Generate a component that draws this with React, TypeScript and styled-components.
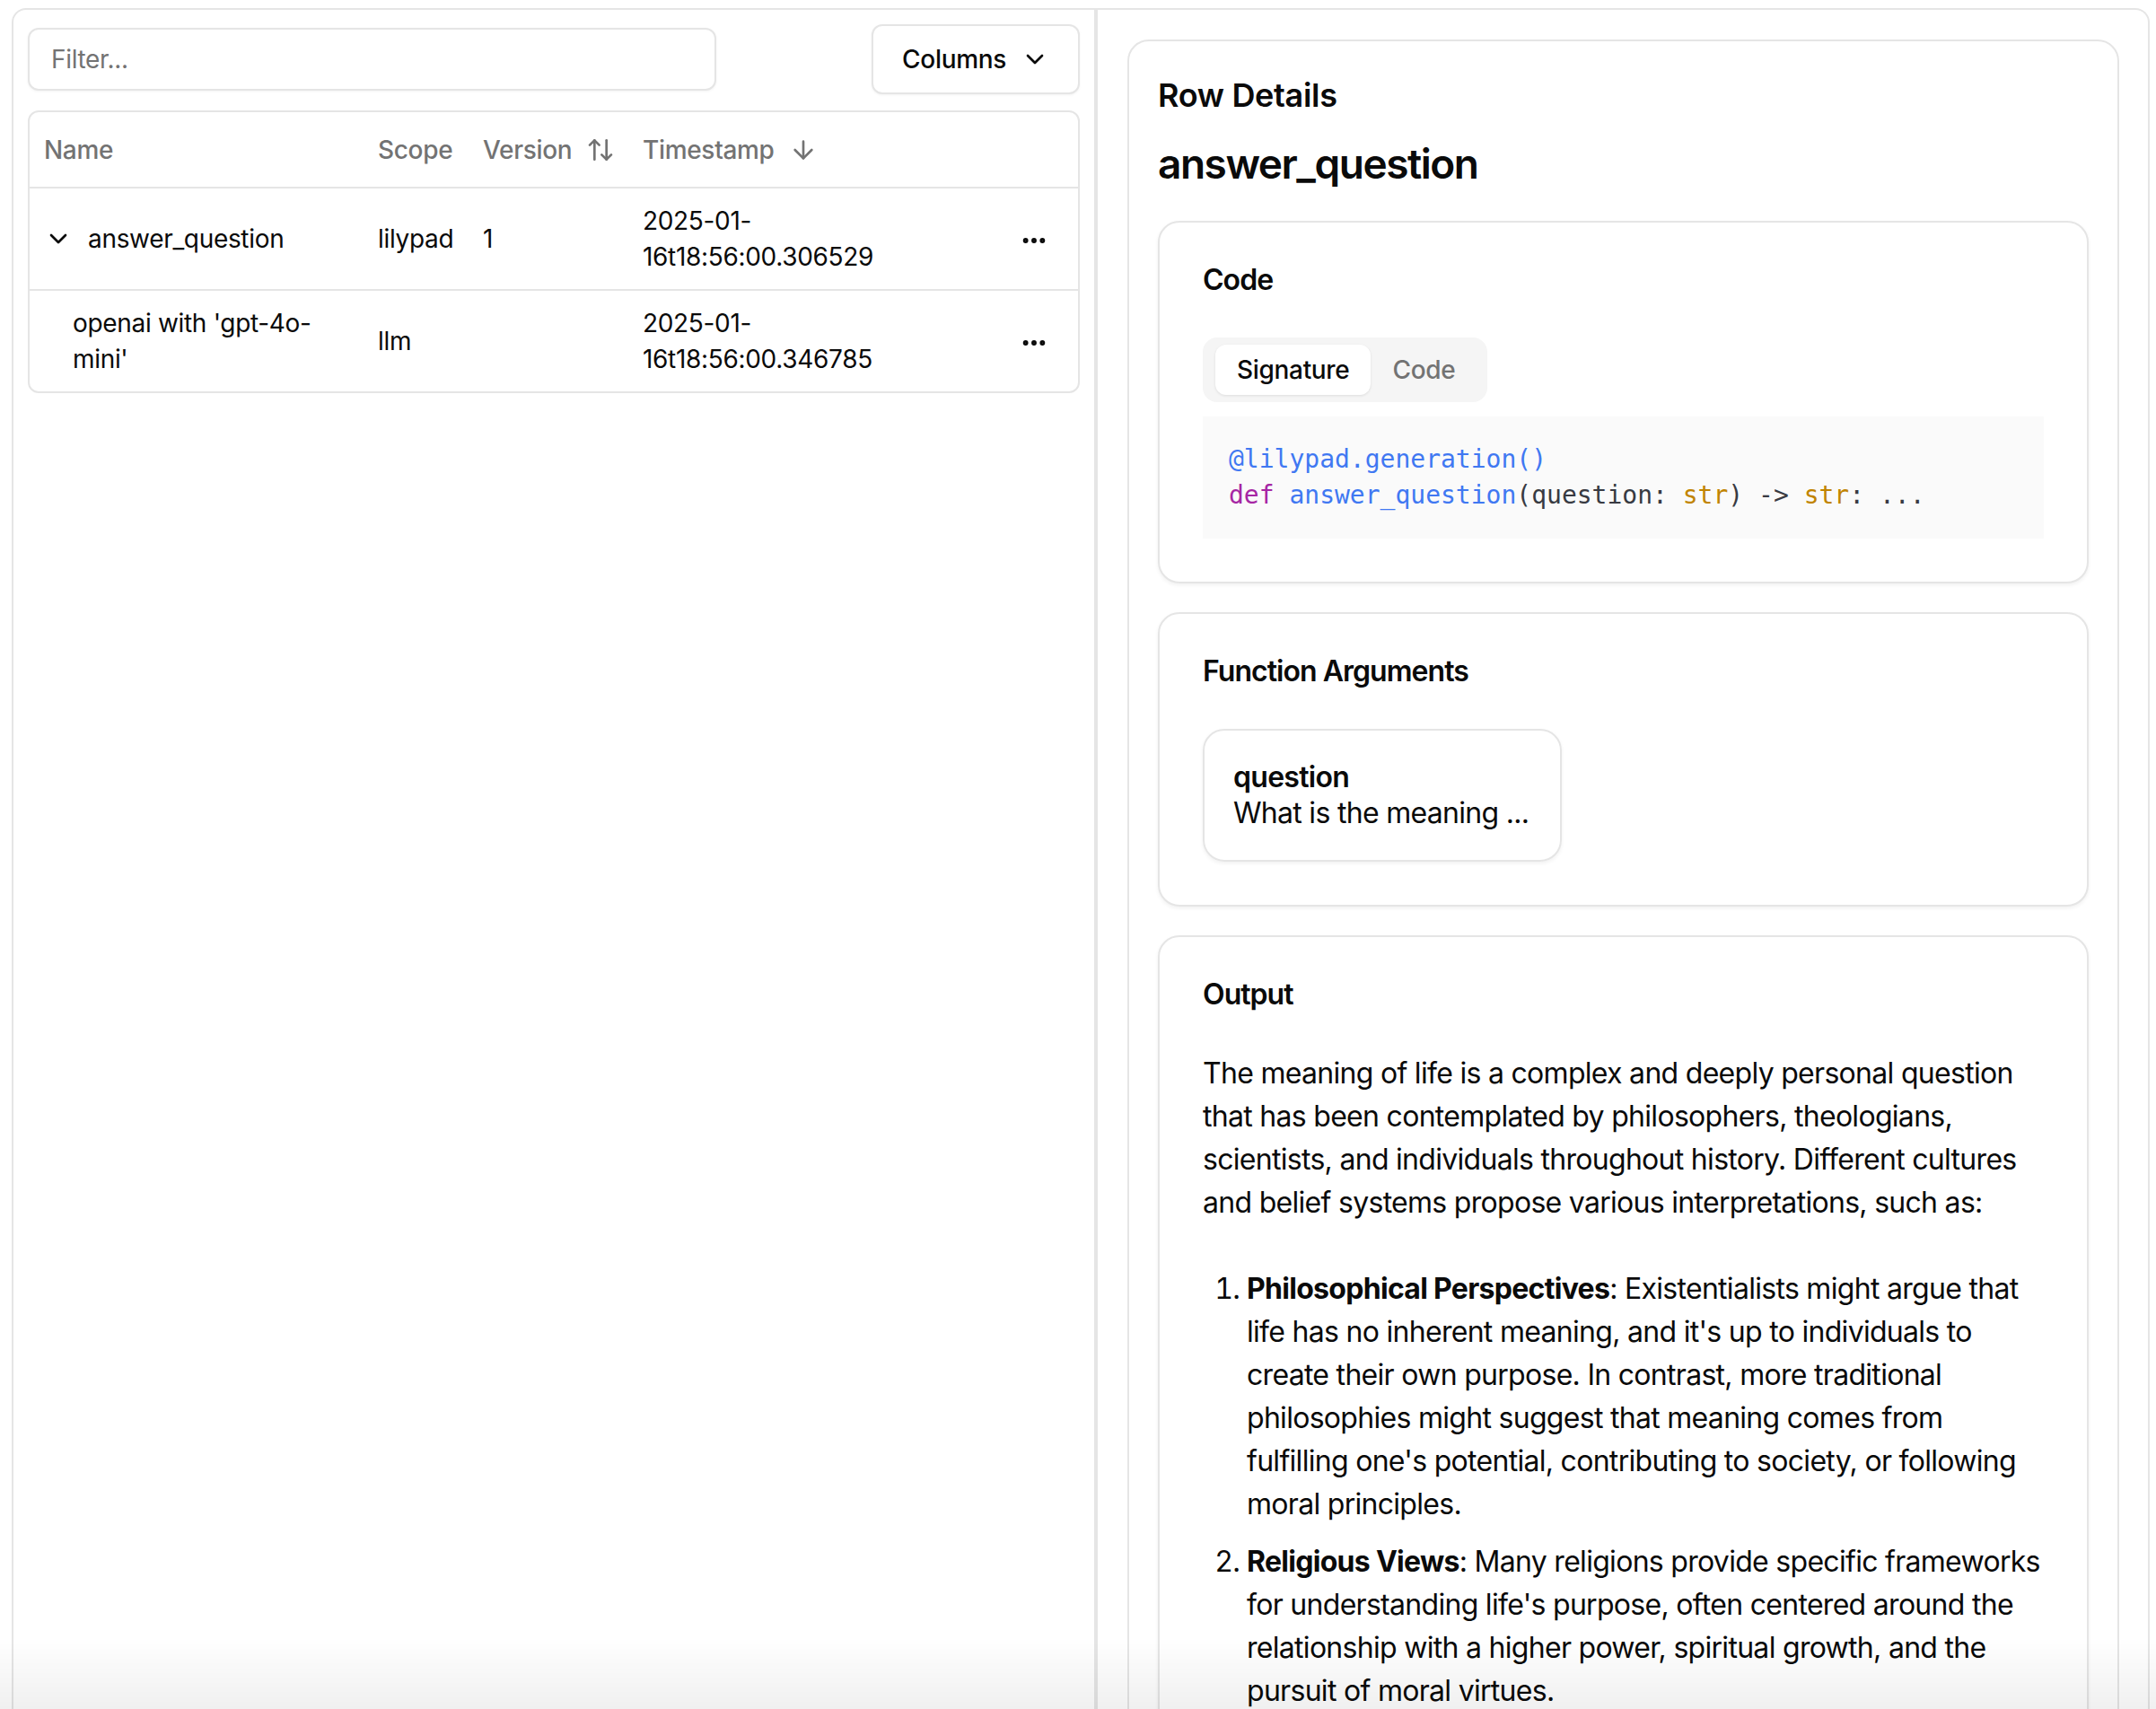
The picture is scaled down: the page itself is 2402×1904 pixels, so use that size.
import React from "react";
import styled, { createGlobalStyle } from "styled-components";
import { ChevronDown, ArrowUpDown, ArrowDown, Ellipsis } from "lucide-react";

const GlobalStyle = createGlobalStyle`
  * { box-sizing: border-box; }
  html, body {
    margin: 0;
    padding: 0;
    background: #ffffff;
  }
  body {
    font-family: Inter, "Noto Sans", sans-serif;
    color: #0a0a0a;
    letter-spacing: -0.02em;
    overflow: hidden;
    -webkit-font-smoothing: antialiased;
  }
  body::after {
    content: "";
    position: fixed;
    left: 0;
    right: 0;
    bottom: 0;
    height: 80px;
    pointer-events: none;
    background: linear-gradient(to bottom, rgba(0, 0, 0, 0), rgba(0, 0, 0, 0.06));
  }
`;

const border = "#e5e5e5";
const muted = "#737373";

const Page = styled.div`
  height: 100vh;
  padding: 9px 7px 0 13px;
`;

const Frame = styled.div`
  height: 100%;
  display: flex;
  border: 2px solid ${border};
  border-bottom: none;
  border-radius: 16px 16px 0 0;
  overflow: hidden;
`;

const LeftPanel = styled.section`
  width: 1204px;
  flex-shrink: 0;
  padding: 16px;
  display: flex;
  flex-direction: column;
`;

const Divider = styled.div`
  width: 4px;
  flex-shrink: 0;
  background: ${border};
`;

const RightPanel = styled.section`
  flex: 1;
  padding: 33px 32px 0 33px;
  overflow: hidden;
`;

const Toolbar = styled.div`
  display: flex;
  align-items: center;
  justify-content: space-between;
  margin-bottom: 18px;
`;

const FilterInput = styled.input`
  width: 767px;
  height: 70px;
  border: 2px solid ${border};
  border-radius: 12px;
  padding: 0 24px;
  font-family: inherit;
  font-size: 28px;
  letter-spacing: inherit;
  color: #0a0a0a;
  box-shadow: 0 1px 3px rgba(0, 0, 0, 0.05);
  outline: none;
  &::placeholder {
    color: ${muted};
  }
`;

const OutlineButton = styled.button`
  height: 78px;
  display: inline-flex;
  align-items: center;
  gap: 16px;
  padding: 0 32px;
  border: 2px solid ${border};
  border-radius: 12px;
  background: #ffffff;
  font-family: inherit;
  font-size: 28px;
  font-weight: 500;
  letter-spacing: inherit;
  color: #0a0a0a;
  box-shadow: 0 1px 3px rgba(0, 0, 0, 0.05);
`;

const TableBox = styled.div`
  border: 2px solid ${border};
  border-radius: 12px;
  overflow: hidden;
`;

const Table = styled.table`
  width: 100%;
  border-collapse: collapse;
  table-layout: fixed;
  font-size: 28px;
`;

const HeadCell = styled.th<{ $w?: number }>`
  width: ${(p) => (p.$w ? `${p.$w}px` : "auto")};
  height: 84px;
  padding: 0 16px;
  text-align: left;
  font-weight: 500;
  color: ${muted};
  border-bottom: 2px solid ${border};
  white-space: nowrap;
`;

const SortLabel = styled.span`
  display: inline-flex;
  align-items: center;
  gap: 16px;
`;

const Row = styled.tr`
  & + & td {
    border-top: 2px solid ${border};
  }
`;

const Cell = styled.td`
  padding: 16px;
  line-height: 40px;
  vertical-align: middle;
  text-align: left;
  word-wrap: break-word;
`;

const ActionCell = styled(Cell)`
  padding: 0 33px 0 16px;
  text-align: right;
  svg {
    display: inline-block;
    vertical-align: middle;
  }
`;

const NameWrap = styled.div<{ $depth: number }>`
  display: flex;
  align-items: center;
  padding-left: ${(p) => p.$depth * 32}px;
  svg {
    flex-shrink: 0;
    margin-right: 17px;
  }
`;

const DetailsCard = styled.div`
  border: 2px solid ${border};
  border-radius: 24px;
  padding: 32px 32px 48px;
  background: #ffffff;
`;

const DetailsLabel = styled.h3`
  margin: 0;
  font-size: 36px;
  line-height: 56px;
  font-weight: 600;
`;

const DetailsTitle = styled.h2`
  margin: 16px 0 0;
  font-size: 46px;
  line-height: 64px;
  font-weight: 600;
  letter-spacing: -0.032em;
`;

const CardStack = styled.div`
  margin-top: 32px;
  display: flex;
  flex-direction: column;
  gap: 32px;
`;

const SectionCard = styled.div`
  border: 2px solid ${border};
  border-radius: 24px;
  padding: 48px;
  background: #ffffff;
  box-shadow: 0 2px 4px rgba(0, 0, 0, 0.06);
`;

const SectionTitle = styled.h4`
  margin: 0;
  font-size: 32px;
  line-height: 32px;
  font-weight: 600;
  letter-spacing: -0.03em;
`;

const SectionBody = styled.div`
  margin-top: 48px;
`;

const TabList = styled.div`
  display: inline-flex;
  align-items: center;
  height: 72px;
  padding: 8px 12px 8px 14px;
  border-radius: 16px;
  background: #f5f5f5;
`;

const TabTrigger = styled.button<{ $active?: boolean }>`
  height: 56px;
  padding: 0 24px;
  border: none;
  border-radius: 12px;
  font-family: inherit;
  font-size: 28px;
  font-weight: 500;
  letter-spacing: inherit;
  color: ${(p) => (p.$active ? "#0a0a0a" : muted)};
  background: ${(p) => (p.$active ? "#ffffff" : "transparent")};
  box-shadow: ${(p) => (p.$active ? "0 1px 3px rgba(0,0,0,0.1)" : "none")};
`;

const CodeBlock = styled.pre`
  margin: 16px 0 0;
  padding: 28px 29px;
  background: #fafafa;
  font-family: "DejaVu Sans Mono", "Liberation Mono", monospace;
  font-size: 28px;
  line-height: 40px;
  letter-spacing: 0;
  color: #383a42;
`;

const Tok = styled.span<{ $c: string }>`
  color: ${(p) => p.$c};
`;

const ArgCard = styled.div`
  width: 400px;
  border: 2px solid ${border};
  border-radius: 24px;
  padding: 32px;
  box-shadow: 0 2px 4px rgba(0, 0, 0, 0.06);
  font-size: 32px;
  line-height: 40px;
  letter-spacing: -0.022em;
`;

const ArgName = styled.div`
  font-weight: 600;
`;

const ArgValue = styled.div`
  white-space: nowrap;
  overflow: hidden;
  text-overflow: ellipsis;
`;

const Prose = styled.div`
  font-size: 32px;
  line-height: 48px;
  letter-spacing: -0.022em;
  white-space: nowrap;
  p {
    margin: 0;
  }
  ol {
    margin: 48px 0 0;
    padding-left: 49px;
  }
  li + li {
    margin-top: 16px;
  }
  strong {
    font-weight: 700;
  }
`;

const rows = [
  {
    name: "answer_question",
    depth: 0,
    expandable: true,
    scope: "lilypad",
    version: "1",
    ts: "2025-01-16t18:56:00.306529",
  },
  {
    name: "openai with 'gpt-4o-mini'",
    depth: 1,
    expandable: false,
    scope: "llm",
    version: "",
    ts: "2025-01-16t18:56:00.346785",
  },
];

// output text, broken where the rendered markdown wraps
const intro = [
  "The meaning of life is a complex and deeply personal question",
  "that has been contemplated by philosophers, theologians,",
  "scientists, and individuals throughout history. Different cultures",
  "and belief systems propose various interpretations, such as:",
];

const points = [
  {
    lead: "Philosophical Perspectives",
    lines: [
      ": Existentialists might argue that",
      "life has no inherent meaning, and it's up to individuals to",
      "create their own purpose. In contrast, more traditional",
      "philosophies might suggest that meaning comes from",
      "fulfilling one's potential, contributing to society, or following",
      "moral principles.",
    ],
  },
  {
    lead: "Religious Views",
    lines: [
      ": Many religions provide specific frameworks",
      "for understanding life's purpose, often centered around the",
      "relationship with a higher power, spiritual growth, and the",
      "pursuit of moral virtues.",
    ],
  },
];

const Lines = ({ lines }: { lines: string[] }) => (
  <>
    {lines.map((l, i) => (
      <React.Fragment key={i}>
        {i > 0 && <br />}
        {l}
      </React.Fragment>
    ))}
  </>
);

export default function App() {
  return (
    <>
      <GlobalStyle />
      <Page>
        <Frame>
          <LeftPanel>
            <Toolbar>
              <FilterInput placeholder="Filter..." />
              <OutlineButton>
                Columns
                <ChevronDown size={32} strokeWidth={2} />
              </OutlineButton>
            </Toolbar>
            <TableBox>
              <Table>
                <thead>
                  <tr>
                    <HeadCell $w={372}>Name</HeadCell>
                    <HeadCell $w={117}>Scope</HeadCell>
                    <HeadCell $w={178}>
                      <SortLabel>
                        Version
                        <ArrowUpDown size={32} strokeWidth={2} />
                      </SortLabel>
                    </HeadCell>
                    <HeadCell $w={390}>
                      <SortLabel>
                        Timestamp
                        <ArrowDown size={32} strokeWidth={2} />
                      </SortLabel>
                    </HeadCell>
                    <HeadCell />
                  </tr>
                </thead>
                <tbody>
                  {rows.map((r) => (
                    <Row key={r.ts}>
                      <Cell>
                        <NameWrap $depth={r.depth}>
                          {r.expandable && <ChevronDown size={32} strokeWidth={2} />}
                          <span>{r.name}</span>
                        </NameWrap>
                      </Cell>
                      <Cell>{r.scope}</Cell>
                      <Cell>{r.version}</Cell>
                      <Cell>{r.ts}</Cell>
                      <ActionCell>
                        <Ellipsis size={32} strokeWidth={2.4} color="#0a0a0a" />
                      </ActionCell>
                    </Row>
                  ))}
                </tbody>
              </Table>
            </TableBox>
          </LeftPanel>
          <Divider />
          <RightPanel>
            <DetailsCard>
              <DetailsLabel>Row Details</DetailsLabel>
              <DetailsTitle>answer_question</DetailsTitle>
              <CardStack>
                <SectionCard>
                  <SectionTitle>Code</SectionTitle>
                  <SectionBody>
                    <TabList>
                      <TabTrigger $active>Signature</TabTrigger>
                      <TabTrigger>Code</TabTrigger>
                    </TabList>
                    <CodeBlock>
                      <Tok $c="#4078f2">@lilypad.generation()</Tok>
                      {"\n"}
                      <Tok $c="#a626a4">def</Tok> <Tok $c="#4078f2">answer_question</Tok>
                      (question: <Tok $c="#c18401">str</Tok>) -&gt;{" "}
                      <Tok $c="#c18401">str</Tok>: ...
                    </CodeBlock>
                  </SectionBody>
                </SectionCard>
                <SectionCard>
                  <SectionTitle>Function Arguments</SectionTitle>
                  <SectionBody>
                    <ArgCard>
                      <ArgName>question</ArgName>
                      <ArgValue>What is the meaning ...</ArgValue>
                    </ArgCard>
                  </SectionBody>
                </SectionCard>
                <SectionCard>
                  <SectionTitle>Output</SectionTitle>
                  <SectionBody>
                    <Prose>
                      <p>
                        <Lines lines={intro} />
                      </p>
                      <ol>
                        {points.map((pt) => (
                          <li key={pt.lead}>
                            <strong>{pt.lead}</strong>
                            <Lines lines={pt.lines} />
                          </li>
                        ))}
                      </ol>
                    </Prose>
                  </SectionBody>
                </SectionCard>
              </CardStack>
            </DetailsCard>
          </RightPanel>
        </Frame>
      </Page>
    </>
  );
}
